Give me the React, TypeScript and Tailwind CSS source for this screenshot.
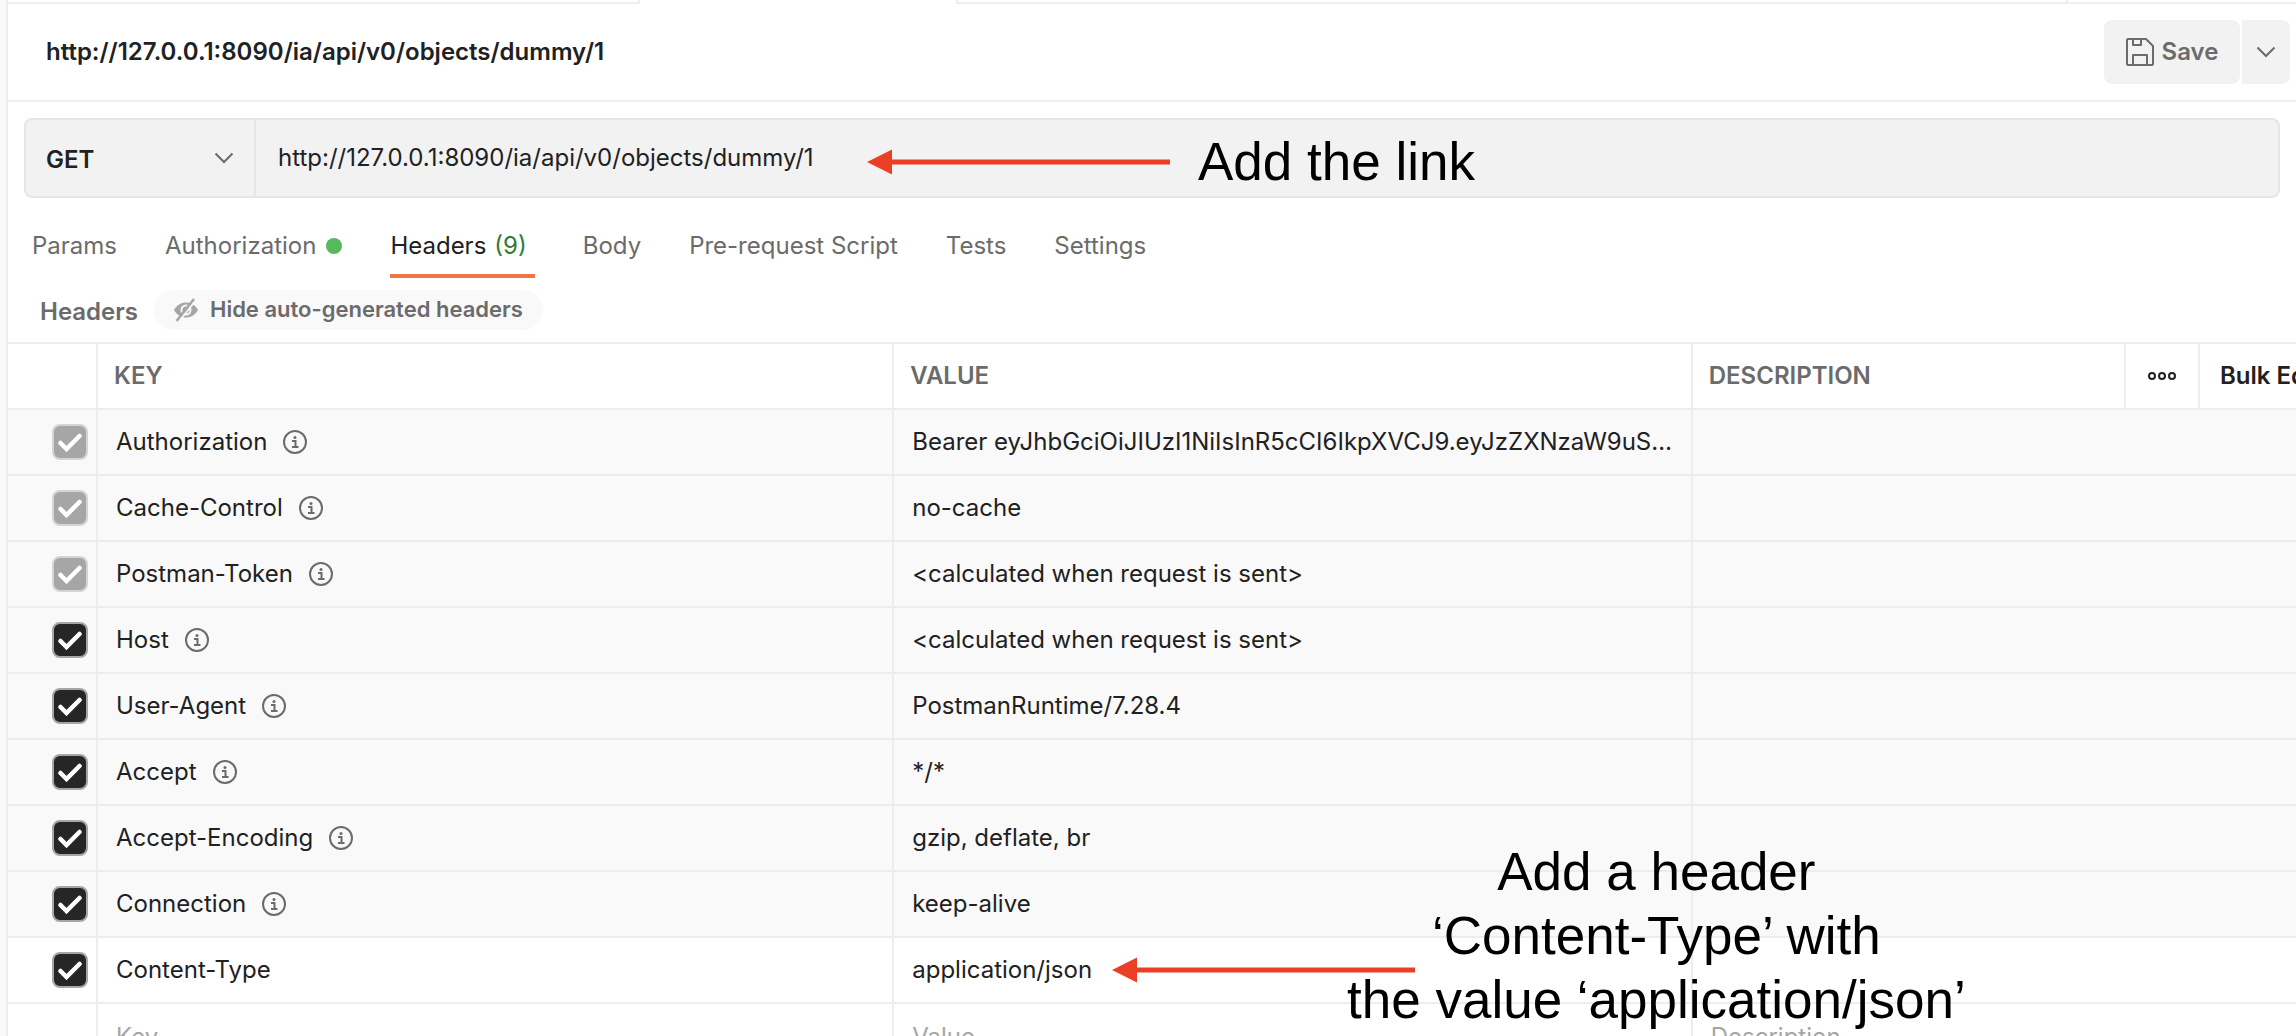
import React from "react";

type HeaderRow = {
  name: string;
  value: string;
  locked?: boolean;
  generated: boolean;
};

const rows: HeaderRow[] = [
  {
    name: "Authorization",
    value:
      "Bearer eyJhbGciOiJIUzI1NiIsInR5cCI6IkpXVCJ9.eyJzZXNzaW9uSWQiOiJkdW1teSJ9",
    locked: true,
    generated: true,
  },
  { name: "Cache-Control", value: "no-cache", locked: true, generated: true },
  { name: "Postman-Token", value: "<calculated when request is sent>", locked: true, generated: true },
  { name: "Host", value: "<calculated when request is sent>", generated: true },
  { name: "User-Agent", value: "PostmanRuntime/7.28.4", generated: true },
  { name: "Accept", value: "*/*", generated: true },
  { name: "Accept-Encoding", value: "gzip, deflate, br", generated: true },
  { name: "Connection", value: "keep-alive", generated: true },
  { name: "Content-Type", value: "application/json", generated: false },
];

const requestUrl = "http://127.0.0.1:8090/ia/api/v0/objects/dummy/1";

function Chevron() {
  return (
    <svg width="20" height="12" viewBox="0 0 20 12" fill="none" stroke="#6b6b6b" strokeWidth="2" aria-hidden="true">
      <path d="M1.5 1.5 10 10l8.5-8.5" />
    </svg>
  );
}

function SaveIcon() {
  return (
    <svg width="28" height="28" viewBox="0 0 28 28" fill="none" stroke="#6b6b6b" strokeWidth="2" strokeLinejoin="round" aria-hidden="true">
      <path d="M2 1h18l7 7v18a1 1 0 0 1-1 1H2a1 1 0 0 1-1-1V2a1 1 0 0 1 1-1Z" />
      <path d="M7 1v6h8V1" />
      <path d="M7 27V17h14v10" />
    </svg>
  );
}

function HiddenEyeIcon() {
  return (
    <svg width="24" height="24" viewBox="0 0 24 24" aria-hidden="true">
      <path d="M0 12C2.500 7 7.500 4.500 12 4.500S21.500 7 24 12c-2.500 5-7.500 7.500-12 7.500S2.500 17 0 12Z" fill="#a6a6a6" />
      <circle cx="12" cy="12" r="4.500" fill="#a6a6a6" stroke="#f9f9f9" strokeWidth="2" />
      <path d="M4.500 24 21.500 2.500" stroke="#f9f9f9" strokeWidth="2" />
      <path d="M2.500 23 20 1" stroke="#a6a6a6" strokeWidth="2.500" />
    </svg>
  );
}

function InfoIcon() {
  return (
    <svg width="24" height="24" viewBox="0 0 24 24" fill="none" stroke="#6b6b6b" aria-hidden="true">
      <circle cx="12" cy="12" r="11" strokeWidth="2" />
      <circle cx="12" cy="7.5" r="1.5" fill="#6b6b6b" stroke="none" />
      <path d="M9 11h3.500v6M9 17h6.500" strokeWidth="2" />
    </svg>
  );
}

function Arrow() {
  return (
    <svg width="303" height="26" viewBox="0 0 303 26" fill="#eb3f25" aria-hidden="true">
      <path d="M0 13 25 .5v10h278v5H25v10Z" />
    </svg>
  );
}

function Tick({ row }: { row: HeaderRow }) {
  return (
    <span className="ml-auto mr-2 grid h-9 w-9 place-items-center">
      <input
        type="checkbox"
        aria-label={`Send ${row.name}`}
        defaultChecked
        disabled={row.locked}
        className="col-start-1 row-start-1 h-9 w-9 appearance-none rounded-lg border-2 border-[#a6a6a6] bg-[#262626] disabled:border-[#d4d4d4] disabled:bg-[#a6a6a6]"
      />
      <svg
        className="pointer-events-none col-start-1 row-start-1"
        width="24"
        height="20"
        viewBox="0 0 24 20"
        fill="none"
        stroke="white"
        strokeWidth="4.5"
        strokeLinecap="round"
        aria-hidden="true"
      >
        <path d="M2.500 11 8.500 17 21.500 4" />
      </svg>
    </span>
  );
}

function Tab({ children }: { children: React.ReactNode }) {
  return (
    <button type="button" className="flex h-16 items-center border-b-4 border-transparent pt-1">
      {children}
    </button>
  );
}

function TopBar() {
  return (
    <header>
      <div className="flex h-1">
        <div className="w-[632px] border-b-2 border-r-2 border-[#ededed]" />
        <div className="w-[316px]" />
        <div className="w-[1112px] border-b-2 border-l-2 border-r-2 border-[#ededed]" />
        <div className="flex-1 border-b-2 border-[#ededed]" />
      </div>
      <div className="flex h-[98px] items-center justify-between border-b-2 border-[#ededed] pl-[38px] pr-1.5">
        <h1 className="text-2xl font-semibold">{requestUrl}</h1>
        <div className="flex gap-0.5">
          <button
            type="button"
            className="flex h-16 w-[136px] items-center justify-center gap-2 rounded-lg bg-[#f2f2f2] text-2xl font-semibold text-[#6b6b6b]"
          >
            <SaveIcon />
            Save
          </button>
          <button
            type="button"
            aria-label="More save options"
            className="flex h-16 w-12 items-center justify-center rounded-r-lg bg-[#f2f2f2]"
          >
            <Chevron />
          </button>
        </div>
      </div>
    </header>
  );
}

function UrlBar() {
  return (
    <div className="relative mx-4 mt-4 flex h-20 rounded-lg border-2 border-[#e6e6e6] bg-[#f2f2f2]">
      <div className="grid w-[230px] items-center border-r-2 border-[#e6e6e6]">
        <select
          aria-label="Method"
          defaultValue="GET"
          className="col-start-1 row-start-1 h-full w-full appearance-none bg-transparent pt-1 pl-5 text-2xl font-semibold"
        >
          <option>GET</option>
          <option>POST</option>
        </select>
        <span className="pointer-events-none col-start-1 row-start-1 mr-5 justify-self-end">
          <Chevron />
        </span>
      </div>
      <input
        type="text"
        aria-label="Request URL"
        defaultValue={requestUrl}
        className="min-w-0 flex-1 bg-transparent px-[22px] text-2xl outline-none"
      />
      <div className="pointer-events-none absolute top-2.5 left-[841px] flex items-center gap-7 font-['Liberation_Sans',Arial,sans-serif] text-[53px] leading-16 text-black">
        <Arrow />
        <span>Add the link</span>
      </div>
    </div>
  );
}

function Tabs() {
  return (
    <nav aria-label="Request sections" className="mt-4 flex gap-12 pl-6 text-2xl text-[#6b6b6b]">
      <Tab>Params</Tab>
      <Tab>
        Authorization
        <span className="ml-2.5 h-4 w-4 rounded-full bg-[#57b85c]" />
      </Tab>
      <button type="button" className="flex h-16 items-center gap-2 border-b-4 border-[#f07445] pt-1 pr-2 text-[#212121]">
        Headers <span className="text-[#2f7d33]">(9)</span>
      </button>
      <Tab>Body</Tab>
      <Tab>Pre-request Script</Tab>
      <Tab>Tests</Tab>
      <Tab>Settings</Tab>
    </nav>
  );
}

function HeadersTable() {
  return (
    <table className="w-full table-fixed border-separate border-spacing-0 text-2xl">
      <colgroup>
        <col className="w-[90px]" />
        <col className="w-[34.8%]" />
        <col className="w-[34.9%]" />
        <col />
        <col className="w-[74px]" />
        <col className="w-24" />
      </colgroup>
      <thead>
        <tr className="h-[66px] text-left text-[#6b6b6b] [&>th]:border-b-2 [&>th]:border-[#ededed] [&>th]:font-semibold">
          <th className="border-r-2" aria-label="Enabled" />
          <th className="border-r-2 px-4">KEY</th>
          <th className="border-r-2 px-4">VALUE</th>
          <th className="border-r-2 px-4">DESCRIPTION</th>
          <th className="border-r-2">
            <button type="button" aria-label="Column options" className="flex w-full justify-center">
              <svg width="28" height="10" viewBox="0 0 28 10" fill="none" stroke="#212121" strokeWidth="2" aria-hidden="true">
                <circle cx="4" cy="5" r="3" />
                <circle cx="14" cy="5" r="3" />
                <circle cx="24" cy="5" r="3" />
              </svg>
            </button>
          </th>
          <th className="overflow-hidden whitespace-nowrap pl-5">
            <button type="button" className="text-[#212121]">
              Bulk Edit
            </button>
          </th>
        </tr>
      </thead>
      <tbody>
        {rows.map((row) => (
          <tr
            key={row.name}
            className={
              row.generated
                ? "h-[66px] bg-[#f9f9f9] [&>td]:border-b-2 [&>td]:border-[#ededed]"
                : "h-[66px] bg-white [&>td]:border-b-2 [&>td]:border-[#ededed]"
            }
          >
            <td className="border-r-2">
              <div className="flex">
                <Tick row={row} />
              </div>
            </td>
            <td className="border-r-2 px-[18px]">
              <div className="flex items-center gap-4">
                {row.name}
                {row.generated && <InfoIcon />}
              </div>
            </td>
            <td className="border-r-2 px-[18px]">
              <div className="truncate">{row.value}</div>
            </td>
            <td colSpan={3} />
          </tr>
        ))}
        <tr className="h-[66px] [&>td]:border-[#ededed]">
          <td className="border-r-2" />
          <td className="border-r-2 px-[18px]">
            <input aria-label="New key" placeholder="Key" className="w-full outline-none placeholder:text-[#a6a6a6]" />
          </td>
          <td className="border-r-2 px-[18px]">
            <input aria-label="New value" placeholder="Value" className="w-full outline-none placeholder:text-[#a6a6a6]" />
          </td>
          <td colSpan={3} className="px-[18px]">
            <input aria-label="New description" placeholder="Description" className="w-full outline-none placeholder:text-[#a6a6a6]" />
          </td>
        </tr>
      </tbody>
    </table>
  );
}

export default function App() {
  return (
    <div className="flex h-screen overflow-hidden bg-white font-['Inter',sans-serif] text-[#212121]">
      <aside className="w-2 shrink-0 border-r-2 border-[#ededed] bg-[#f9f9f9]" />
      <main className="min-w-0 flex-1">
        <TopBar />
        <UrlBar />
        <Tabs />
        <div className="flex h-[66px] items-center border-b-2 border-[#ededed] pl-8 text-2xl font-semibold text-[#6b6b6b]">
          <h2 className="pt-1">Headers</h2>
          <button
            type="button"
            className="ml-4 flex h-10 items-center gap-3 rounded-full bg-[#f9f9f9] px-5 text-[22px]"
          >
            <HiddenEyeIcon />
            Hide auto-generated headers
          </button>
        </div>
        <div className="relative">
          <HeadersTable />
          <div className="pointer-events-none absolute top-[496px] left-[1104px] flex items-center font-['Liberation_Sans',Arial,sans-serif] text-[53px] leading-16 text-black">
            <div className="mt-[68px]">
              <Arrow />
            </div>
            <p className="-ml-[68px] text-center">
              Add a header
              <br />
              ‘Content-Type’ with
              <br />
              the value ‘application/json’
            </p>
          </div>
        </div>
      </main>
    </div>
  );
}
